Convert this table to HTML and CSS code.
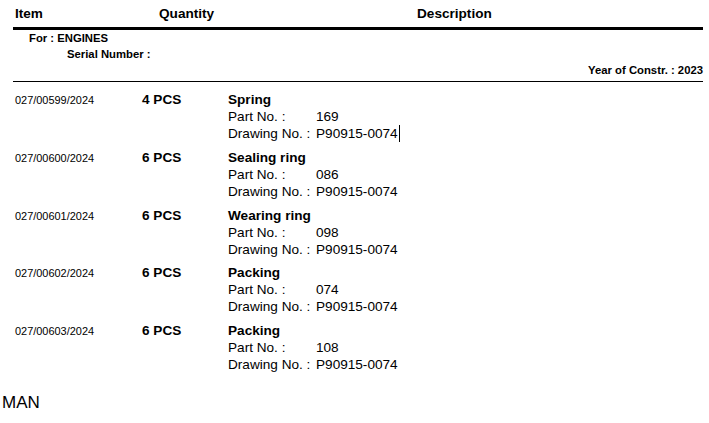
FILE: index.html
```html
<!DOCTYPE html>
<html>
<head>
<meta charset="utf-8">
<link rel="stylesheet" href="styles.css">
</head>
<body>
<div class="sheet">
  <div class="head">
    <span class="h-item">Item</span>
    <span class="h-qty">Quantity</span>
    <span class="h-desc">Description</span>
  </div>
  <div class="meta">
    <div class="for">For : ENGINES</div>
    <div class="serial">Serial Number :</div>
    <div class="year">Year of Constr. : 2023</div>
  </div>
  <div class="rows">
    <div class="row">
      <div class="num">027/00599/2024</div>
      <div class="qty">4 PCS</div>
      <div class="desc">
        <div class="name">Spring</div>
        <div class="kv"><span>Part No. :</span><span>169</span></div>
        <div class="kv"><span>Drawing No. :</span><span>P90915-0074<span class="caret"></span></span></div>
      </div>
    </div>
    <div class="row">
      <div class="num">027/00600/2024</div>
      <div class="qty">6 PCS</div>
      <div class="desc">
        <div class="name">Sealing ring</div>
        <div class="kv"><span>Part No. :</span><span>086</span></div>
        <div class="kv"><span>Drawing No. :</span><span>P90915-0074</span></div>
      </div>
    </div>
    <div class="row">
      <div class="num">027/00601/2024</div>
      <div class="qty">6 PCS</div>
      <div class="desc">
        <div class="name">Wearing ring</div>
        <div class="kv"><span>Part No. :</span><span>098</span></div>
        <div class="kv"><span>Drawing No. :</span><span>P90915-0074</span></div>
      </div>
    </div>
    <div class="row">
      <div class="num">027/00602/2024</div>
      <div class="qty">6 PCS</div>
      <div class="desc">
        <div class="name">Packing</div>
        <div class="kv"><span>Part No. :</span><span>074</span></div>
        <div class="kv"><span>Drawing No. :</span><span>P90915-0074</span></div>
      </div>
    </div>
    <div class="row">
      <div class="num">027/00603/2024</div>
      <div class="qty">6 PCS</div>
      <div class="desc">
        <div class="name">Packing</div>
        <div class="kv"><span>Part No. :</span><span>108</span></div>
        <div class="kv"><span>Drawing No. :</span><span>P90915-0074</span></div>
      </div>
    </div>
  </div>
</div>
<div class="footer">MAN</div>
</body>
</html>
```
FILE: styles.css
```css
html, body {
  margin: 0;
  padding: 0;
  background: #ffffff;
  color: #000000;
  font-family: "Liberation Sans", Arial, sans-serif;
}
.sheet {
  margin: 0 6px 0 13px;
}
.head {
  display: grid;
  grid-template-columns: 144px 258px 1fr;
  padding: 5px 0 5px 2px;
  font-size: 13.6px;
  font-weight: bold;
  line-height: 17px;
  border-bottom: 3px solid #000;
}
.meta {
  font-size: 11.3px;
  font-weight: bold;
  border-bottom: 1px solid #000;
  padding-bottom: 3px;
}
.for {
  padding-left: 16px;
  line-height: 16px;
}
.serial {
  padding-left: 54px;
  line-height: 17px;
}
.year {
  text-align: right;
  line-height: 15px;
}
.rows {
  display: flex;
  flex-direction: column;
  gap: 6.75px;
  padding-top: 9px;
}
.row {
  display: grid;
  grid-template-columns: 127px 86px 1fr;
  align-items: baseline;
  padding-left: 2px;
  font-size: 13.6px;
  line-height: 17px;
}
.num {
  font-size: 10.95px;
}
.qty {
  font-weight: bold;
}
.name {
  font-weight: bold;
}
.kv {
  display: grid;
  grid-template-columns: 88px auto;
  justify-content: start;
}
.caret {
  display: inline-block;
  width: 1px;
  height: 17px;
  background: #000;
  vertical-align: top;
  margin-left: 1px;
}
.footer {
  margin-top: 21px;
  padding-left: 2px;
  font-size: 17px;
  line-height: 18px;
}
```
